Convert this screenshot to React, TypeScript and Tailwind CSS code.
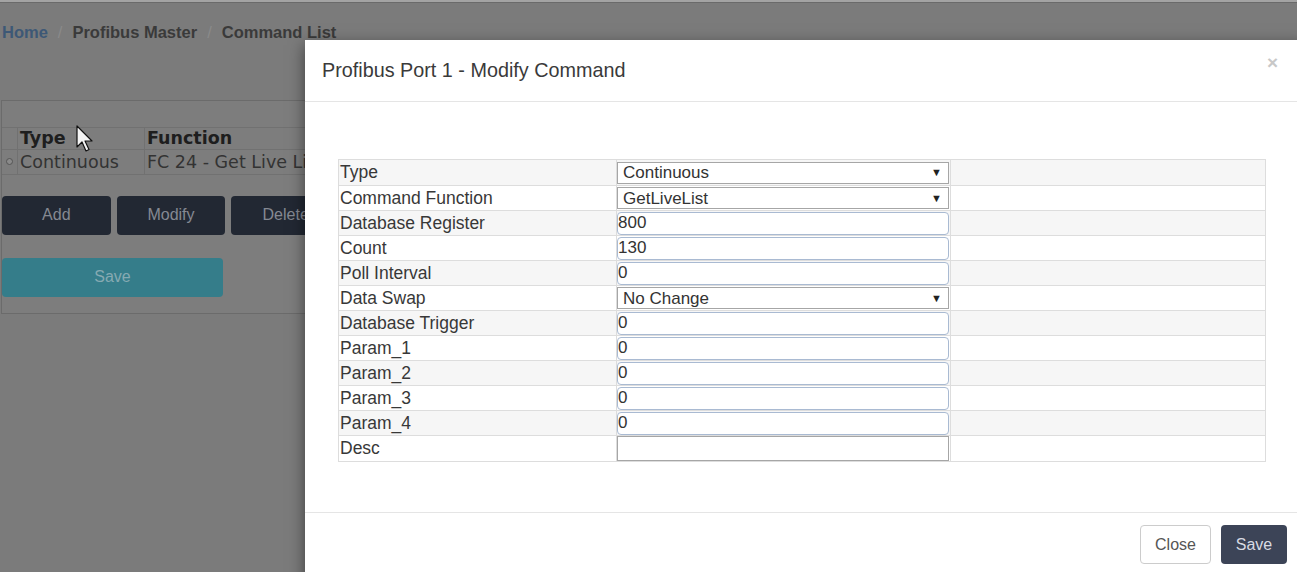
import React from "react";

type Row = { label: string; kind: "select" | "input" | "desc"; value: string };

const rows: Row[] = [
  { label: "Type", kind: "select", value: "Continuous" },
  { label: "Command Function", kind: "select", value: "GetLiveList" },
  { label: "Database Register", kind: "input", value: "800" },
  { label: "Count", kind: "input", value: "130" },
  { label: "Poll Interval", kind: "input", value: "0" },
  { label: "Data Swap", kind: "select", value: "No Change" },
  { label: "Database Trigger", kind: "input", value: "0" },
  { label: "Param_1", kind: "input", value: "0" },
  { label: "Param_2", kind: "input", value: "0" },
  { label: "Param_3", kind: "input", value: "0" },
  { label: "Param_4", kind: "input", value: "0" },
  { label: "Desc", kind: "desc", value: "" },
];

function Field({ row }: { row: Row }) {
  if (row.kind === "select") {
    return (
      <div className="flex h-[22px] w-[332px] items-center justify-between border border-[#a6a6a6] bg-white pl-[5px] pr-[6px] text-[17px] leading-none text-[#333]">
        <span>{row.value}</span>
        <span className="text-[11px] text-[#222]">▼</span>
      </div>
    );
  }
  if (row.kind === "desc") {
    return (
      <input
        readOnly
        value=""
        className="block h-[25px] w-[332px] border border-[#a6a6a6] bg-white outline-none"
      />
    );
  }
  return (
    <input
      readOnly
      value={row.value}
      className="block h-[23px] w-[332px] rounded-[4px] border border-[#a9bad2] bg-white px-0 text-[17px] leading-none text-[#333] outline-none"
    />
  );
}

export default function App() {
  return (
    <div
      className="relative h-[572px] w-full overflow-hidden bg-[#7b7b7b]"
      style={{ fontFamily: '"Liberation Sans", Arial, sans-serif' }}
    >
      {/* top strip */}
      <div className="h-[2px] bg-[#a3a3a3]" />
      <div className="h-[1px] bg-[#6a6a6a]" />

      {/* breadcrumb */}
      <div className="flex items-center gap-[10px] px-[2px] pt-[17px] text-[16.5px] font-bold text-[#3a3a3a]">
        <span className="text-[#3d5876]">Home</span>
        <span className="font-normal text-[#8a8a8a]">/</span>
        <span>Profibus Master</span>
        <span className="font-normal text-[#8a8a8a]">/</span>
        <span>Command List</span>
      </div>

      {/* panel */}
      <div className="ml-[1px] mt-[55px] h-[214px] w-[340px] border border-[#6b6b6b] bg-[#7d7d7d]">
        <div
          className="mt-[26px] text-[17.5px] text-[#2c2c2c]"
          style={{ fontFamily: '"DejaVu Sans", Verdana, sans-serif' }}
        >
          <div className="flex h-[23px] items-center border-y border-[#717171]">
            <div className="h-full w-[16px] border-r border-[#717171]" />
            <div className="flex h-full w-[127px] items-center border-r border-[#717171] pl-[2px] font-bold text-[#1e1e1e]">
              Type
            </div>
            <div className="pl-[2px] font-bold text-[#1e1e1e]">Function</div>
          </div>
          <div className="flex h-[25px] items-center border-b border-[#717171]">
            <div className="flex h-full w-[16px] items-center justify-center border-r border-[#717171]">
              <span className="h-[7px] w-[7px] rounded-full border border-[#555] bg-[#8a8a8a]" />
            </div>
            <div className="flex h-full w-[127px] items-center border-r border-[#717171] pl-[2px] text-[#333]">
              Continuous
            </div>
            <div className="whitespace-nowrap pl-[2px] text-[#333]">FC 24 - Get Live List</div>
          </div>
        </div>

        <div className="mt-[21px] flex gap-[6px] text-[16px] text-[#858992]">
          <div className="flex h-[39px] w-[110px] items-center justify-center rounded-[4px] bg-[#222833]">Add</div>
          <div className="flex h-[39px] w-[110px] items-center justify-center rounded-[4px] bg-[#222833]">Modify</div>
          <div className="flex h-[39px] w-[110px] items-center justify-center rounded-[4px] bg-[#222833]">Delete</div>
        </div>
        <div className="mt-[23px] flex h-[39px] w-[221px] items-center justify-center rounded-[4px] bg-[#357d8a] text-[16px] text-[#86aab2]">
          Save
        </div>
      </div>

      {/* mouse cursor */}
      <svg className="absolute left-[76px] top-[125px]" width="18" height="28" viewBox="0 0 18 28">
        <path
          d="M1 1 L1 22 L6 17 L10 26 L13 24.5 L9 16 L16 16 Z"
          fill="#f4f4f4"
          stroke="#111"
          strokeWidth="1.2"
          strokeLinejoin="round"
        />
      </svg>

      {/* modal */}
      <div className="absolute left-[305px] top-[40px] h-[560px] w-[1000px] bg-white shadow-[0_5px_15px_rgba(0,0,0,0.5)]">
        <div className="flex h-[62px] items-center justify-between border-b border-[#e5e5e5] pl-[17px] pr-[27px]">
          <h4 className="pt-[1px] text-[19.8px] text-[#3a3a3a]">Profibus Port 1 - Modify Command</h4>
          <span className="mt-[-17px] text-[19px] font-bold leading-none text-[#c8c8c8]">×</span>
        </div>

        <div className="pb-[50px] pl-[33px] pr-[39px] pt-[57px]">
          <div className="w-[928px] border border-[#dddddd] text-[17.5px] text-[#383838]">
            {rows.map((row, i) => {
              const striped = i % 2 === 0;
              const bg = striped ? "bg-[#f6f6f6]" : "bg-white";
              const h = row.kind === "desc" ? "h-[26px]" : "h-[25px]";
              return (
                <div
                  key={row.label}
                  className={`flex ${h} ${i > 0 ? "border-t border-[#dddddd]" : ""}`}
                >
                  <div className={`flex w-[278px] items-center border-r border-[#dddddd] pl-[1px] ${bg}`}>
                    {row.label}
                  </div>
                  <div className={`flex w-[334px] items-center border-r border-[#dddddd] ${bg}`}>
                    <Field row={row} />
                  </div>
                  <div className={`flex-1 ${bg}`} />
                </div>
              );
            })}
          </div>
        </div>

        <div className="flex justify-end gap-[10px] border-t border-[#e5e5e5] pr-[18px] pt-[12px]">
          <button className="h-[39px] w-[71px] rounded-[4px] border border-[#cccccc] bg-white text-[16px] text-[#555]">
            Close
          </button>
          <button className="h-[39px] w-[66px] rounded-[4px] bg-[#3c4457] text-[16px] text-[#d8dbe3]">
            Save
          </button>
        </div>
      </div>
    </div>
  );
}
